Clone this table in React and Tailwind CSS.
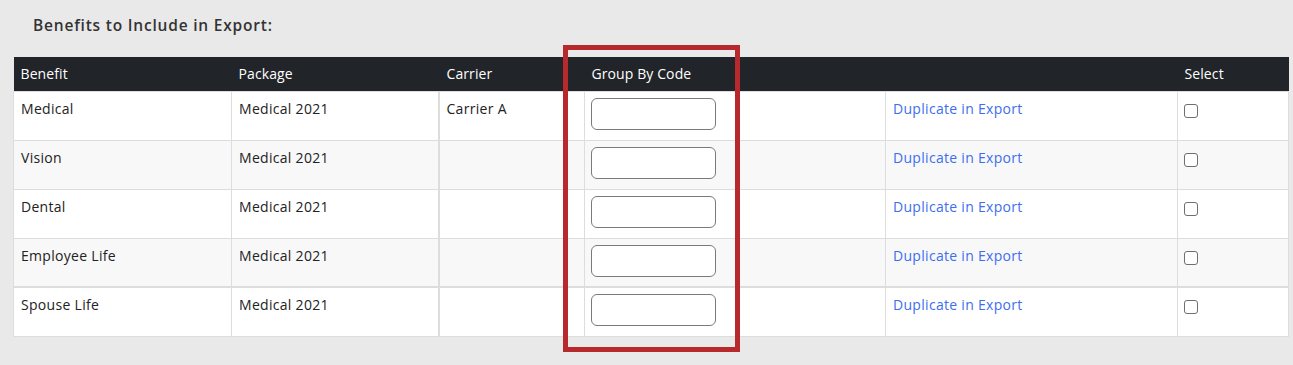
import React from "react";

const rows = [
  { benefit: "Medical", pkg: "Medical 2021", carrier: "Carrier A" },
  { benefit: "Vision", pkg: "Medical 2021", carrier: "" },
  { benefit: "Dental", pkg: "Medical 2021", carrier: "" },
  { benefit: "Employee Life", pkg: "Medical 2021", carrier: "" },
  { benefit: "Spouse Life", pkg: "Medical 2021", carrier: "" },
];

export default function App() {
  return (
    <div
      className="relative w-[1293px] h-[365px] bg-[#e9e9e9] overflow-hidden"
      style={{ fontFamily: '"Open Sans", "Noto Sans", sans-serif' }}
    >
      <div className="pt-[14px] pl-[33px] h-[57px]">
        <h2 className="text-[15.5px] font-semibold text-[#333] leading-[22px] tracking-[0.8px]">
          Benefits to Include in Export:
        </h2>
      </div>
      <div className="pl-[13px]">
        <table className="w-[1275px] border-collapse table-fixed text-[14px] tracking-[0.3px]">
          <colgroup>
            <col className="w-[218px]" />
            <col className="w-[207px]" />
            <col className="w-[146px]" />
            <col className="w-[301px]" />
            <col className="w-[292px]" />
            <col className="w-[111px]" />
          </colgroup>
          <thead>
            <tr className="bg-[#212428] text-white h-[34px] tracking-[0.1px]">
              <th className="text-left font-medium pl-[7px] pb-[1px]">Benefit</th>
              <th className="text-left font-medium pl-[7px] pb-[1px]">Package</th>
              <th className="text-left font-medium pl-[8px] pb-[1px]">Carrier</th>
              <th className="text-left font-medium pl-[7px] pb-[1px]">Group By Code</th>
              <th className="text-left font-medium pl-[7px] pb-[1px]"></th>
              <th className="text-left font-medium pl-[7px] pb-[1px]">Select</th>
            </tr>
          </thead>
          <tbody>
            {rows.map((r, i) => (
              <tr
                key={r.benefit}
                className={`h-[49px] ${i % 2 === 1 ? "bg-[#f8f8f8]" : "bg-white"} ${
                  i === 4 ? "border-t-2 border-[#dddddd]" : ""
                }`}
              >
                <td className="align-top border border-[#dddddd] pl-[7px] pt-[6px] text-[#222]">
                  {r.benefit}
                </td>
                <td className="align-top border border-[#dddddd] pl-[7px] pt-[6px] text-[#222]">
                  {r.pkg}
                </td>
                <td className="align-top border border-[#dddddd] border-l-2 pl-[7px] pt-[6px] text-[#222]">
                  {r.carrier}
                </td>
                <td className="align-top border border-[#dddddd] pl-[6px] pt-[6px]">
                  <input
                    type="text"
                    className="block w-[125px] h-[32px] rounded-[6px] border border-[#7a7a7a] bg-white"
                  />
                </td>
                <td className="align-top border border-[#dddddd] pl-[7px] pt-[6px]">
                  <a href="#" className="text-[#3d6ef0]">
                    Duplicate in Export
                  </a>
                </td>
                <td className="align-top border border-[#dddddd] pl-[6px] pt-[12px]">
                  <span className="block w-[14px] h-[14px] rounded-[3px] border border-[#6f6f6f] bg-white" />
                </td>
              </tr>
            ))}
          </tbody>
        </table>
      </div>
      <div className="absolute left-[563px] top-[45px] w-[177px] h-[307px] border-[5px] border-[#b8292d]" />
    </div>
  );
}
